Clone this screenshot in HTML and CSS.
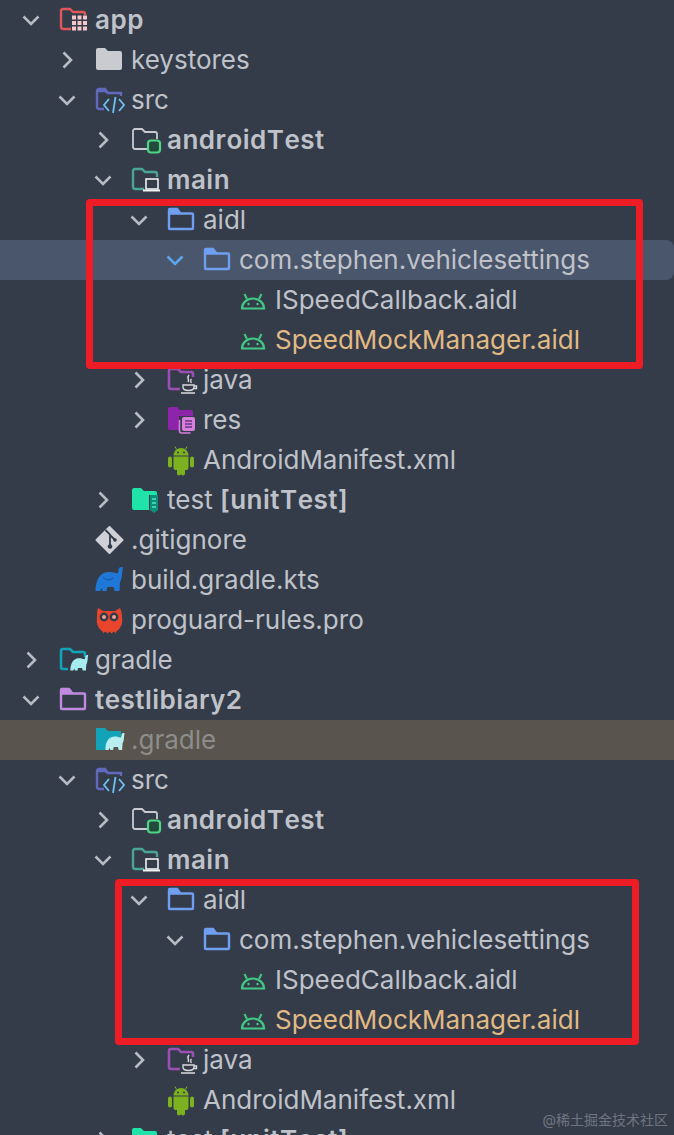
FILE: index.html
```html
<!DOCTYPE html>
<html lang="en">
<head>
<meta charset="utf-8">
<title>Project tree</title>
<link rel="stylesheet" href="styles.css">
</head>
<body>
<svg class="defs" width="0" height="0" aria-hidden="true">
  <defs>
    <path id="elephant" d="M.5 27C.5 17 4.500 8.500 13 8c4-.3 7 1 9 1.500 1.500-.5 1.500-2.500 1.500-4 .5-2.500 3.500-3 4.500-2l-.5 2.500c-.5 2 0 8-2.500 12l-.5 9h-5l-1-4h-6l-1 4h-4l-.5-3-2 3z"/>
    <symbol id="chev-d" viewBox="0 0 24 24"><path d="M4.500 8.500 12 16l7.500-7.500" fill="none" stroke="currentColor" stroke-width="2.600"/></symbol>
    <symbol id="chev-r" viewBox="0 0 24 24"><path d="M8.500 4.500 16 12l-7.500 7.500" fill="none" stroke="currentColor" stroke-width="2.600"/></symbol>
    <symbol id="i-app" viewBox="0 0 32 32">
      <path d="M12 25H4a2 2 0 0 1-2-2V7a2 2 0 0 1 2-2h7l3 3h10a2 2 0 0 1 2 2v1" fill="none" stroke="#e0565b" stroke-width="2.400"/>
      <g fill="#f6c6cb"><rect x="13" y="11.500" width="4" height="4"/><rect x="18.500" y="11.500" width="4" height="4"/><rect x="24" y="11.500" width="4" height="4"/><rect x="13" y="17" width="4" height="4"/><rect x="18.500" y="17" width="4" height="4"/><rect x="24" y="17" width="4" height="4"/><rect x="13" y="22.500" width="4" height="4"/><rect x="18.500" y="22.500" width="4" height="4"/><rect x="24" y="22.500" width="4" height="4"/></g>
    </symbol>
    <symbol id="i-grey" viewBox="0 0 32 32"><path d="M3 4h7l3 3h12a2 2 0 0 1 2 2v15a2 2 0 0 1-2 2H3a2 2 0 0 1-2-2V6a2 2 0 0 1 2-2z" fill="#c9cbd1"/></symbol>
    <symbol id="i-src" viewBox="0 0 32 32">
      <path d="M9 25H4a2 2 0 0 1-2-2V7h8l3 2h13v3M2 7a2 2 0 0 1 2-2h6l3 4" fill="none" stroke="#6268bd" stroke-width="2.400"/>
      <path d="M14 15l-5 6 5 6M24 15l5 6-5 6" fill="none" stroke="#6cc1f5" stroke-width="1.800"/>
      <path d="M20.500 13l-2.500 16" fill="none" stroke="#6cc1f5" stroke-width="1.800"/>
    </symbol>
    <symbol id="i-atest" viewBox="0 0 32 32">
      <path d="M16 25H4a2 2 0 0 1-2-2V7a2 2 0 0 1 2-2h7l3 3h10a2 2 0 0 1 2 2v5" fill="none" stroke="#c9cbd1" stroke-width="1.800"/>
      <rect x="17" y="16.500" width="12" height="12" rx="3" fill="#234a3c" stroke="#4dd583" stroke-width="2.200"/>
    </symbol>
    <symbol id="i-main" viewBox="0 0 32 32">
      <path d="M13 25H4a2 2 0 0 1-2-2V7a2 2 0 0 1 2-2h7l3 3h10a2 2 0 0 1 2 2v3" fill="none" stroke="#4aa596" stroke-width="2.400"/>
      <rect x="15" y="15" width="12" height="10" fill="none" stroke="#eef0f3" stroke-width="1.600"/>
      <path d="M12 26.500h17" stroke="#eef0f3" stroke-width="2"/>
    </symbol>
    <symbol id="i-blue" viewBox="0 0 32 32"><path d="M3 9.500h22a1 1 0 0 1 1 1V24a1 1 0 0 1-1 1H3a1 1 0 0 1-1-1V6a1 1 0 0 1 1-1h7l3 4" fill="none" stroke="#6f9ff0" stroke-width="2.400"/><path d="M2 5h8l3 4H2z" fill="#6f9ff0"/></symbol>
    <symbol id="i-bug" viewBox="0 0 32 32">
      <path d="M3 24.500a11 10 0 0 1 22 0z" fill="none" stroke="#41c985" stroke-width="2.200"/>
      <path d="M8 15l-2.500-5M20 15l2.500-5" stroke="#41c985" stroke-width="2"/>
      <circle cx="9.500" cy="20" r="1.200" fill="#41c985"/><circle cx="18.500" cy="20" r="1.200" fill="#41c985"/>
    </symbol>
    <symbol id="i-java" viewBox="0 0 32 32">
      <path d="M13 25H4a2 2 0 0 1-2-2V7a2 2 0 0 1 2-2h7l3 3h10a2 2 0 0 1 2 2v3" fill="none" stroke="#9b4fb5" stroke-width="2.600"/>
      <path d="M22 11c-3 3 1 4-1 7M24.500 15c-2 1.500 0 2.500-.5 4" fill="none" stroke="#d8dade" stroke-width="1.400"/>
      <path d="M16 21h11v2c0 2.500-2 3.500-5.500 3.500S16 25.500 16 23zM14 29h14M27 22h2.500v2.500H27" fill="none" stroke="#d8dade" stroke-width="1.400"/>
    </symbol>
    <symbol id="i-res" viewBox="0 0 32 32">
      <path d="M3 3h7l3 3h11a2 2 0 0 1 2 2v4H12v14H3a2 2 0 0 1-2-2V5a2 2 0 0 1 2-2z" fill="#8e24aa"/>
      <path d="M12.500 16v11a2 2 0 0 0 2 2h9" fill="none" stroke="#d77fdf" stroke-width="1.600"/>
      <rect x="15" y="13" width="13" height="14" rx="2" fill="#d77fdf"/>
      <path d="M18 17h7M18 20h7M18 23h7" stroke="#6d3285" stroke-width="1.600"/>
    </symbol>
    <symbol id="i-droid" viewBox="0 0 32 32">
      <path d="M6.500 11.500a7.500 7.500 0 0 1 15 0z" fill="#7cb21f"/>
      <path d="M9.500 5.500 8 2.500M18.500 5.500 20 2.500" stroke="#7cb21f" stroke-width="1"/>
      <circle cx="11" cy="8.500" r="1" fill="#343c49"/><circle cx="17" cy="8.500" r="1" fill="#343c49"/>
      <path d="M6.500 12.500h15V24a2 2 0 0 1-2 2H18v3.500a2 2 0 0 1-4 0V26h0v3.500a2 2 0 0 1-4 0V26H8.500a2 2 0 0 1-2-2z" fill="#7cb21f"/>
      <rect x="1" y="12.500" width="4" height="11" rx="2" fill="#7cb21f"/><rect x="23" y="12.500" width="4" height="11" rx="2" fill="#7cb21f"/>
    </symbol>
    <symbol id="i-test" viewBox="0 0 32 32">
      <path d="M3 4h7l3 3h11a2 2 0 0 1 2 2v2H18v15H3a2 2 0 0 1-2-2V6a2 2 0 0 1 2-2z" fill="#1fe3a8"/>
      <path d="M19 11h8v15l-4 3-4-3z" fill="#0f8f7a"/>
      <path d="M21 15h4M21 19h4M21 23h4" stroke="#49e9bd" stroke-width="1.600"/>
    </symbol>
    <symbol id="i-git" viewBox="0 0 32 32">
      <path d="M14.500 3 27.500 16 14.500 29 1.500 16z" fill="#cfd1d7" stroke="#cfd1d7" stroke-width="2" stroke-linejoin="round"/>
      <path d="M10.500 6l4.500 4.500v12M15 11l5 5" fill="none" stroke="#343c49" stroke-width="1.800"/>
      <circle cx="15" cy="22.500" r="2.300" fill="#343c49"/><circle cx="20" cy="16" r="1.800" fill="#343c49"/>
    </symbol>
    <symbol id="i-eleph" viewBox="0 0 32 32">
      <use href="#elephant" fill="#1f78d8"/>
      <path d="M8 13c2 3 6 4 10 1" fill="none" stroke="#155aa8" stroke-width="1.200"/>
    </symbol>
    <symbol id="i-owl" viewBox="0 0 32 32">
      <path d="M3 4l5 3h12l5-3c1.500 3 2 6 2 9 1 6-1 11-5 14l-1.500 2-2-1.500-2 2-2-2-2 2-2-2-2 1.500L7 27C3 24 1 19 2 13c0-3 0-6 1-9z" fill="#e8452c"/>
      <circle cx="9" cy="13" r="4.400" fill="#343c49"/><circle cx="19" cy="13" r="4.400" fill="#343c49"/>
      <circle cx="9" cy="13" r="2" fill="#f2a08f"/><circle cx="19" cy="13" r="2" fill="#f2a08f"/>
    </symbol>
    <symbol id="i-gradle-o" viewBox="0 0 32 32">
      <path d="M9 25H4a2 2 0 0 1-2-2V7a2 2 0 0 1 2-2h7l3 3h10a2 2 0 0 1 2 2v3" fill="none" stroke="#12a3b8" stroke-width="2.600"/>
      <use href="#elephant" fill="#a6ecee" transform="translate(11 9) scale(.65)"/>
    </symbol>
    <symbol id="i-gradle-f" viewBox="0 0 32 32">
      <path d="M1 4h9l3 3h13v6l-11 2-5 11H1z" fill="#12a3b8"/>
      <use href="#elephant" fill="#b8eef0" transform="translate(10 7) scale(.7)"/>
    </symbol>
    <symbol id="i-lib" viewBox="0 0 32 32"><path d="M3 9.500h22a1 1 0 0 1 1 1V24a1 1 0 0 1-1 1H3a1 1 0 0 1-1-1V6a1 1 0 0 1 1-1h7l3 4" fill="none" stroke="#c08ae0" stroke-width="2.400"/><path d="M2 5h8l3 4H2z" fill="#c08ae0"/></symbol>
  </defs>
</svg>

<main class="tree">
  <div class="row l0"><svg class="chev"><use href="#chev-d"/></svg><svg class="ico"><use href="#i-app"/></svg><span class="name b">app</span></div>
  <div class="row l1"><svg class="chev"><use href="#chev-r"/></svg><svg class="ico"><use href="#i-grey"/></svg><span class="name">keystores</span></div>
  <div class="row l1"><svg class="chev"><use href="#chev-d"/></svg><svg class="ico"><use href="#i-src"/></svg><span class="name">src</span></div>
  <div class="row l2"><svg class="chev"><use href="#chev-r"/></svg><svg class="ico"><use href="#i-atest"/></svg><span class="name b">androidTest</span></div>
  <div class="row l2"><svg class="chev"><use href="#chev-d"/></svg><svg class="ico"><use href="#i-main"/></svg><span class="name b">main</span></div>
  <div class="row l3"><svg class="chev"><use href="#chev-d"/></svg><svg class="ico"><use href="#i-blue"/></svg><span class="name">aidl</span></div>
  <div class="row l4 selected"><svg class="chev"><use href="#chev-d"/></svg><svg class="ico"><use href="#i-blue"/></svg><span class="name">com.stephen.vehiclesettings</span></div>
  <div class="row l5"><span class="chev"></span><svg class="ico"><use href="#i-bug"/></svg><span class="name">ISpeedCallback.aidl</span></div>
  <div class="row l5"><span class="chev"></span><svg class="ico"><use href="#i-bug"/></svg><span class="name mod">SpeedMockManager.aidl</span></div>
  <div class="row l3"><svg class="chev"><use href="#chev-r"/></svg><svg class="ico"><use href="#i-java"/></svg><span class="name">java</span></div>
  <div class="row l3"><svg class="chev"><use href="#chev-r"/></svg><svg class="ico"><use href="#i-res"/></svg><span class="name">res</span></div>
  <div class="row l3"><span class="chev"></span><svg class="ico"><use href="#i-droid"/></svg><span class="name">AndroidManifest.xml</span></div>
  <div class="row l2"><svg class="chev"><use href="#chev-r"/></svg><svg class="ico"><use href="#i-test"/></svg><span class="name">test <b class="b">[unitTest]</b></span></div>
  <div class="row l1"><span class="chev"></span><svg class="ico"><use href="#i-git"/></svg><span class="name">.gitignore</span></div>
  <div class="row l1"><span class="chev"></span><svg class="ico"><use href="#i-eleph"/></svg><span class="name">build.gradle.kts</span></div>
  <div class="row l1"><span class="chev"></span><svg class="ico"><use href="#i-owl"/></svg><span class="name">proguard-rules.pro</span></div>
  <div class="row l0"><svg class="chev"><use href="#chev-r"/></svg><svg class="ico"><use href="#i-gradle-o"/></svg><span class="name">gradle</span></div>
  <div class="row l0"><svg class="chev"><use href="#chev-d"/></svg><svg class="ico"><use href="#i-lib"/></svg><span class="name b">testlibiary2</span></div>
  <div class="row l1 ignored"><span class="chev"></span><svg class="ico"><use href="#i-gradle-f"/></svg><span class="name">.gradle</span></div>
  <div class="row l1"><svg class="chev"><use href="#chev-d"/></svg><svg class="ico"><use href="#i-src"/></svg><span class="name">src</span></div>
  <div class="row l2"><svg class="chev"><use href="#chev-r"/></svg><svg class="ico"><use href="#i-atest"/></svg><span class="name b">androidTest</span></div>
  <div class="row l2"><svg class="chev"><use href="#chev-d"/></svg><svg class="ico"><use href="#i-main"/></svg><span class="name b">main</span></div>
  <div class="row l3"><svg class="chev"><use href="#chev-d"/></svg><svg class="ico"><use href="#i-blue"/></svg><span class="name">aidl</span></div>
  <div class="row l4"><svg class="chev"><use href="#chev-d"/></svg><svg class="ico"><use href="#i-blue"/></svg><span class="name">com.stephen.vehiclesettings</span></div>
  <div class="row l5"><span class="chev"></span><svg class="ico"><use href="#i-bug"/></svg><span class="name">ISpeedCallback.aidl</span></div>
  <div class="row l5"><span class="chev"></span><svg class="ico"><use href="#i-bug"/></svg><span class="name mod">SpeedMockManager.aidl</span></div>
  <div class="row l3"><svg class="chev"><use href="#chev-r"/></svg><svg class="ico"><use href="#i-java"/></svg><span class="name">java</span></div>
  <div class="row l3"><span class="chev"></span><svg class="ico"><use href="#i-droid"/></svg><span class="name">AndroidManifest.xml</span></div>
  <div class="row l2"><svg class="chev"><use href="#chev-r"/></svg><svg class="ico"><use href="#i-test"/></svg><span class="name">test <b class="b">[unitTest]</b></span></div>

  <div class="mark mark-a"></div>
  <div class="mark mark-b"></div>
  <div class="watermark">@稀土掘金技术社区</div>
</main>
</body>
</html>
```

FILE: styles.css
```css
html, body {
  margin: 0;
  padding: 0;
  height: 1135px;
  overflow: hidden;
  background: #343c49;
}

.defs {
  position: absolute;
}

.tree {
  position: relative;
  height: 1135px;
  overflow: hidden;
  font-family: Inter, "Noto Sans CJK SC", sans-serif;
  font-size: 26px;
  color: #bfc2c9;
}

.row {
  display: flex;
  align-items: center;
  height: 40px;
  box-sizing: border-box;
}

.l0 { padding-left: 19px; }
.l1 { padding-left: 55px; }
.l2 { padding-left: 91px; }
.l3 { padding-left: 127px; }
.l4 { padding-left: 163px; }
.l5 { padding-left: 199px; }

.chev {
  flex: none;
  width: 24px;
  height: 24px;
  margin-right: 16px;
  color: #b7bbc3;
}

.ico {
  flex: none;
  width: 32px;
  height: 32px;
  margin-right: 4px;
}

.name {
  white-space: nowrap;
  padding-bottom: 2px;
}

.b {
  font-weight: 600;
  letter-spacing: 0.5px;
  font-kerning: none;
}

.mod {
  color: #e0b985;
}

.selected {
  background: #4a566c;
  border-radius: 0 8px 8px 0;
}

.selected .chev {
  color: #5ba4ee;
}

.ignored {
  background: #5a544e;
}

.ignored .name {
  color: #8d8d8a;
}

.mark {
  position: absolute;
  box-sizing: border-box;
  border: 7px solid #ee1c25;
  border-radius: 4px;
}

.mark-a {
  left: 86px;
  top: 199px;
  width: 557px;
  height: 170px;
}

.mark-b {
  left: 115px;
  top: 879px;
  width: 524px;
  height: 166px;
}

.watermark {
  position: absolute;
  right: 6px;
  top: 1111px;
  font-size: 14px;
  line-height: 18px;
  color: #6f7580;
}
```
